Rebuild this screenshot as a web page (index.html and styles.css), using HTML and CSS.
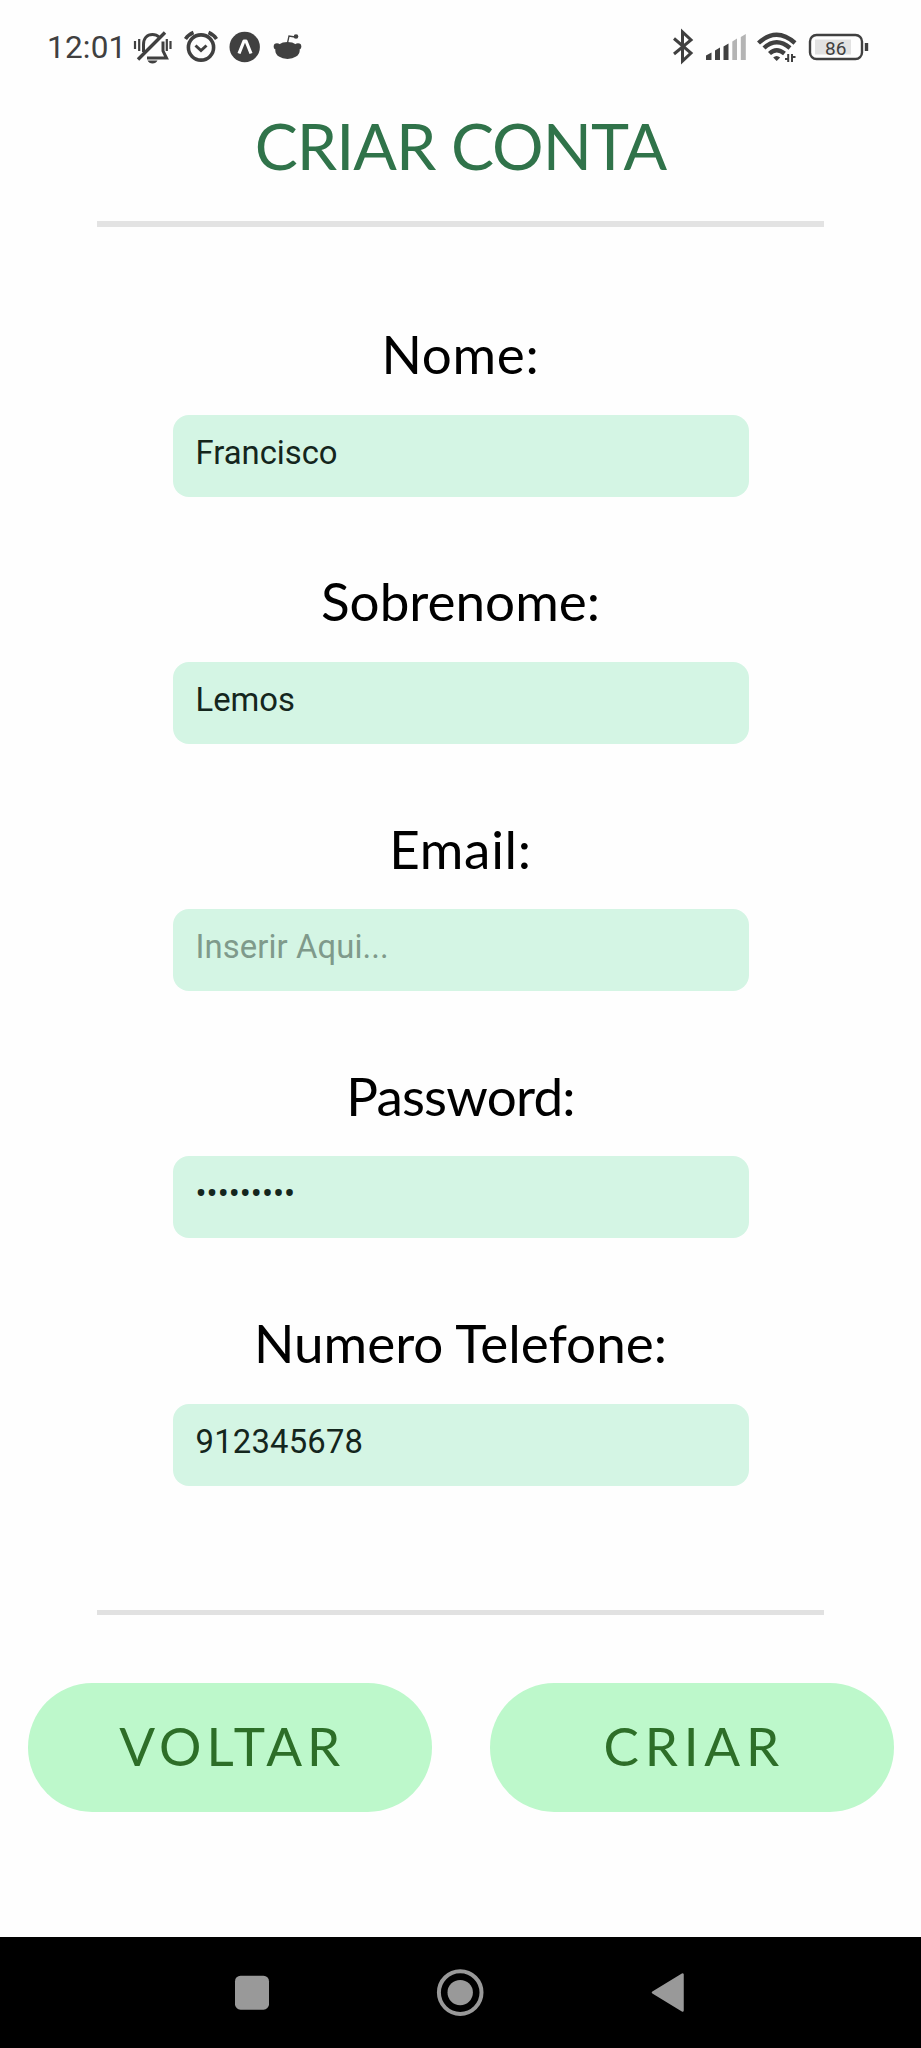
FILE: index.html
```html
<!DOCTYPE html>
<html lang="pt">
<head>
<meta charset="utf-8">
<title>Criar Conta</title>
<link rel="stylesheet" href="styles.css">
</head>
<body>
<header class="status">
  <span class="clock">12:01</span>
  <svg class="icons-left" width="172" height="40" viewBox="130 28 172 40" fill="none" stroke="#404040" stroke-width="3">
    <path d="M143.500 52V44.500c0-6 3.500-10 9-10 2.500 0 5 1 6.500 2.500M163 41.500v9.500l3.500 7H147"/>
    <path d="M138 59.500L165 32.500" stroke-width="3.400"/>
    <path d="M135 41v8M139.200 39v12M166.800 39v12M170.500 41v8" stroke-width="2.200"/>
    <path d="M147.500 60.500h10q-1.500 3-5 3t-5-3z" fill="#404040" stroke="none"/>
    <circle cx="201" cy="47.500" r="12.600" stroke-width="3.600"/>
    <path d="M195.500 45.500l5.500 5 5.500-5" stroke-width="3"/>
    <path d="M185.500 39q3-4.500 8-6.500M216.500 39q-3-4.500-8-6.500" stroke-width="3.600"/>
    <circle cx="244.700" cy="47" r="15.200" fill="#404040" stroke="none"/>
    <path d="M239 53.500L244 41h2l5 12.500" stroke="#fefefe" stroke-width="3.200" stroke-linejoin="round"/>
    <ellipse cx="287.500" cy="50.500" rx="12.200" ry="8.500" fill="#404040" stroke="none"/>
    <circle cx="277" cy="46.500" r="3.300" fill="#404040" stroke="none"/>
    <circle cx="298" cy="46.500" r="3.300" fill="#404040" stroke="none"/>
    <path d="M287.500 43l1.500-7 6 1" stroke-width="1.300"/>
    <circle cx="296" cy="36.500" r="2.300" fill="#404040" stroke="none"/>
  </svg>
  <svg class="icons-right" width="202" height="40" viewBox="670 28 202 40" fill="none" stroke="#404040">
    <path d="M674 38.500L691 53l-8.500 8V32l8.500 8L674 54" stroke-width="3"/>
    <g stroke="none" fill="#404040">
      <path d="M706 60v-4.500l5.500-3V60zM715 60v-9.500l5-3V60zM723.500 60V46.500l5-3V60z"/>
      <path d="M732.300 60V41.500l4.700-3V60zM740.800 60V37l5-3V60z" fill="#b4b4b4"/>
    </g>
    <path d="M758.500 43Q776.500 26.500 795 43" stroke-width="4.400"/>
    <path d="M764 48Q776.500 36.500 790 48" stroke-width="4.400"/>
    <path d="M769.500 53.500Q776.500 47 784.500 53.500" stroke-width="4.400"/>
    <path d="M773.200 57.500q3.300-3 7 0l-3.500 3.500z" fill="#404040" stroke="none"/>
    <path d="M785 59h3.200v-5M788.200 54v8M792 54v8M792 57h3.500" stroke-width="2"/>
    <rect x="810" y="35" width="52" height="24" rx="6.500" stroke-width="2.400"/>
    <rect x="815" y="39.500" width="36" height="15" fill="#e2e2e2" stroke="none"/>
    <path d="M866.500 43v8" stroke-width="3.400"/>
    <text class="charge" x="825" y="54.500">86</text>
  </svg>
</header>
<main class="page">
  <h1 class="title"><span>CRIAR CONTA</span></h1>
  <hr class="rule">
  <form class="form">
    <div class="field"><label class="label nome">Nome:</label><div class="input">Francisco</div></div>
    <div class="field"><label class="label sobrenome">Sobrenome:</label><div class="input">Lemos</div></div>
    <div class="field"><label class="label email">Email:</label><div class="input placeholder">Inserir Aqui...</div></div>
    <div class="field"><label class="label password">Password:</label><div class="input dots">•••••••••</div></div>
    <div class="field"><label class="label telefone">Numero Telefone:</label><div class="input phone">912345678</div></div>
  </form>
  <hr class="rule lower">
  <div class="actions">
    <div class="button voltar"><span>VOLTAR</span></div>
    <div class="button criar"><span>CRIAR</span></div>
  </div>
</main>
<nav class="nav">
  <svg width="921" height="111" viewBox="0 1937 921 111" fill="#999">
    <rect x="235" y="1975.700" width="34" height="34" rx="5.500"/>
    <circle cx="460.200" cy="1992.600" r="21.300" fill="none" stroke="#999" stroke-width="4"/>
    <circle cx="460.200" cy="1992.600" r="12.700"/>
    <path d="M653 1992.500L682.500 1974.500V2010.500z" stroke="#999" stroke-width="2.500" stroke-linejoin="round"/>
  </svg>
</nav>
</body>
</html>
```
FILE: styles.css
```css
* { box-sizing: border-box; }
body {
  margin: 0;
  width: 921px;
  height: 2048px;
  display: flex;
  flex-direction: column;
  background: #fefefe;
  font-family: Lato, sans-serif;
  overflow: hidden;
}
.status {
  height: 94px;
  padding: 28px 49px 0 47px;
  display: flex;
  align-items: flex-start;
  color: #404040;
}
.clock {
  width: 83px;
  font: 31.5px/40px Roboto, sans-serif;
  letter-spacing: 0.2px;
  white-space: nowrap;
}
.icons-right { margin-left: auto; }
.charge { font: 400 19px Roboto, sans-serif; fill: #404040; stroke: none; }
.page { flex: 1; }
.title {
  margin: 0;
  height: 127px;
  padding-top: 12px;
  text-align: center;
  font-weight: 400;
  font-size: 64.5px;
  line-height: 78px;
  letter-spacing: -1px;
  color: #30734a;
}
.rule {
  width: 727px;
  height: 6px;
  margin: 0 auto;
  border: 0;
  background: #e3e3e3;
}
.form { padding-top: 87px; display: flex; flex-direction: column; align-items: center; }
.field { height: 247.250px; width: 576px; display: flex; flex-direction: column; }
.label {
  height: 100.500px;
  padding-top: 8px;
  display: flex;
  justify-content: center;
  font-size: 53px;
  line-height: 64px;
  color: #000;
  white-space: nowrap;
}
.nome { letter-spacing: 0.7px; }
.email { letter-spacing: 0.7px; }
.password { letter-spacing: -0.8px; }
.input {
  height: 82px;
  padding: 18px 23px;
  border-radius: 16px;
  background: #d4f5e4;
  color: #14261d;
  font: 32.800px/40px Roboto, sans-serif;
}
.phone { letter-spacing: 0.2px; }
.placeholder { color: #7f9a8b; letter-spacing: 0.1px; }
.rule.lower { margin-top: 59.750px; height: 5px; background: #e1e1e1; }
.actions { padding: 68px 27.500px 0 28px; display: flex; justify-content: space-between; }
.button {
  width: 403.500px;
  height: 128.500px;
  padding-bottom: 4px;
  border-radius: 64.250px;
  display: flex;
  align-items: center;
  justify-content: center;
  background: #bdf8cb;
  color: #2d6e28;
  font-size: 53px;
  letter-spacing: 5px;
}
.voltar { padding-left: 5px; }
.criar { padding-left: 5px; letter-spacing: 5.8px; }
.nav { height: 111px; background: #000; }
.nav svg { display: block; }
```
